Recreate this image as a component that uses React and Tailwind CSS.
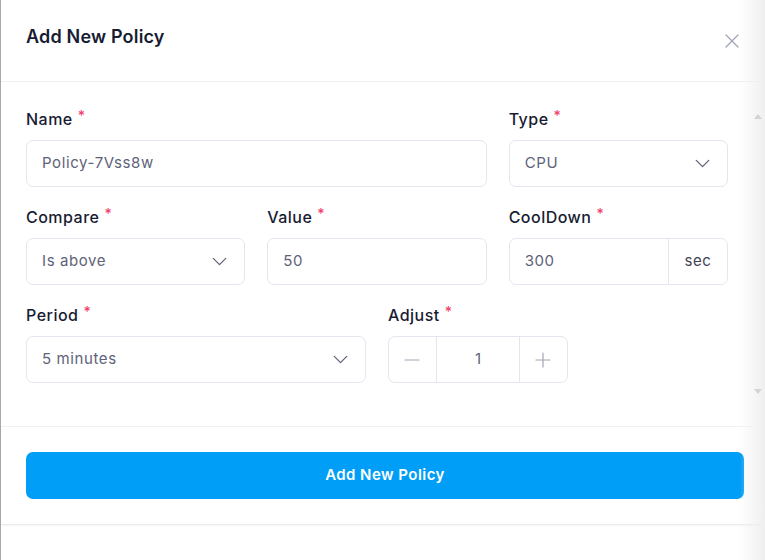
import { X, ChevronDown, Minus, Plus } from 'lucide-react'

function Label({ children }) {
  return (
    <label className="flex items-start h-[22px] mb-[10px] text-[16px] leading-[22px] font-medium tracking-[0.03em] text-[#181c32]">
      {children}
      <span className="ml-[5px] text-[#f1416c] text-[14px] leading-[16px]">*</span>
    </label>
  )
}

function Select({ value }) {
  return (
    <div className="h-[47px] rounded-[7px] border border-[#e4e6ef] bg-white flex items-center justify-between pl-[15px] pr-[12px] text-[15px] tracking-[0.04em] text-[#5e6278]">
      <span>{value}</span>
      <ChevronDown className="w-[25px] h-[25px] text-[#5e6278]" strokeWidth={1.2} />
    </div>
  )
}

function Input({ value }) {
  return (
    <div className="h-[47px] rounded-[7px] border border-[#e4e6ef] bg-white flex items-center px-[15px] text-[15px] tracking-[0.04em] text-[#5e6278]">
      {value}
    </div>
  )
}

export default function App() {
  return (
    <div className="relative w-[765px] h-[560px] bg-white overflow-hidden font-['Inter',sans-serif]">
      <div className="w-[770px] h-full flex flex-col border-l border-[#a9a9a9]">
        {/* header */}
        <div className="h-[82px] shrink-0 flex items-center justify-between pl-[25px] pr-[26px] border-b border-[#eff2f5]">
          <h2 className="text-[18px] font-semibold tracking-[0.01em] text-[#181c32] pb-[8px]">Add New Policy</h2>
          <button className="w-[24px] h-[24px] flex items-center justify-center text-[#a1a5b7]">
            <X className="w-[24px] h-[24px]" strokeWidth={1.3} />
          </button>
        </div>

        {/* body */}
        <div className="w-[753px] pl-[25px] pr-[26px] pt-[26px] pb-[43px] border-b border-[#eff2f5]">
          <div className="grid grid-cols-12 gap-x-[22px] gap-y-[19px]">
            <div className="col-span-8">
              <Label>Name</Label>
              <Input value="Policy-7Vss8w" />
            </div>
            <div className="col-span-4">
              <Label>Type</Label>
              <Select value="CPU" />
            </div>

            <div className="col-span-4">
              <Label>Compare</Label>
              <Select value="Is above" />
            </div>
            <div className="col-span-4">
              <Label>Value</Label>
              <Input value="50" />
            </div>
            <div className="col-span-4">
              <Label>CoolDown</Label>
              <div className="h-[47px] rounded-[7px] border border-[#e4e6ef] flex text-[15px] tracking-[0.04em]">
                <div className="flex-1 flex items-center px-[15px] text-[#5e6278]">300</div>
                <div className="w-[59px] flex items-center justify-center border-l border-[#e4e6ef] text-[#3f4254]">
                  sec
                </div>
              </div>
            </div>

            <div className="col-span-6">
              <Label>Period</Label>
              <Select value="5 minutes" />
            </div>
            <div className="col-span-6">
              <Label>Adjust</Label>
              <div className="w-[180px] h-[47px] rounded-[7px] border border-[#e4e6ef] flex text-[15px]">
                <div className="w-[47px] flex items-center justify-center text-[#a1a5b7]">
                  <Minus className="w-[24px] h-[24px]" strokeWidth={1.2} />
                </div>
                <div className="flex-1 flex items-center justify-center border-x border-[#e4e6ef] text-[#5e6278]">1</div>
                <div className="w-[47px] flex items-center justify-center text-[#a1a5b7]">
                  <Plus className="w-[24px] h-[24px]" strokeWidth={1.2} />
                </div>
              </div>
            </div>
          </div>
        </div>

        {/* footer */}
        <div className="pl-[25px] pr-[26px] pt-[25px] pb-[25px] border-b border-[#e9ebef] shadow-[0_1px_2px_rgba(0,0,0,0.04)]">
          <button className="w-full h-[47px] rounded-[7px] bg-[#009ef7] text-white text-[15px] font-semibold tracking-[0.03em]">
            Add New Policy
          </button>
        </div>
      </div>

      {/* right edge shade + scrollbar arrows */}
      <div className="absolute top-0 right-0 w-[25px] h-full bg-gradient-to-r from-white/0 to-[#efefef] pointer-events-none" />
      <div className="absolute right-[3px] top-[114px] w-0 h-0 border-x-[4px] border-x-transparent border-b-[5px] border-b-[#d4d4d4]" />
      <div className="absolute right-[3px] top-[389px] w-0 h-0 border-x-[4px] border-x-transparent border-t-[5px] border-t-[#d4d4d4]" />
    </div>
  )
}
